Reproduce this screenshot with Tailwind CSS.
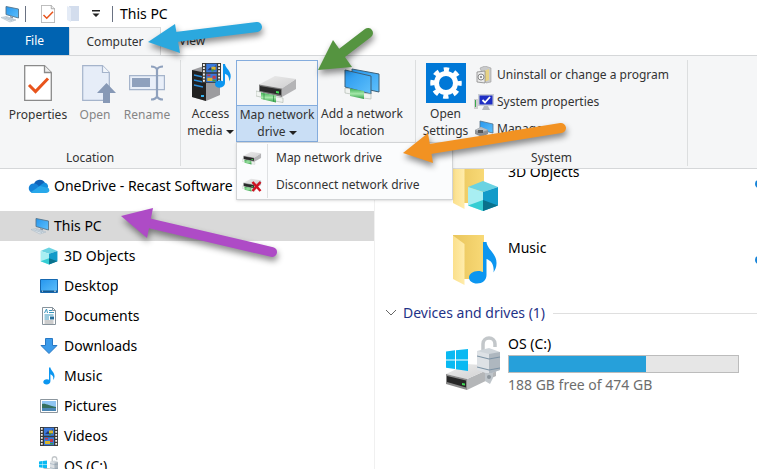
<!DOCTYPE html>
<html lang="en">
    <head>
        <meta charset="UTF-8" />
        <meta name="viewport" content="width=device-width, initial-scale=1.0" />
        <title>This PC</title>
        <script src="https://cdn.jsdelivr.net/npm/@tailwindcss/browser@4"></script>
    </head>
    <body class="relative flex h-screen flex-col overflow-hidden bg-white font-['Noto_Sans','Open_Sans',sans-serif] text-[14px] leading-[18px] text-black">
        <!-- shared icons -->
        <svg class="absolute h-0 w-0" aria-hidden="true">
            <defs>
                <linearGradient id="gScreen" x1="0" y1="0" x2="1" y2="1">
                    <stop offset="0" stop-color="#2596ee" />
                    <stop offset="1" stop-color="#5fc0fb" />
                </linearGradient>
                <linearGradient id="gFolder" x1="0" y1="0" x2="1" y2="0">
                    <stop offset="0" stop-color="#e9c55c" />
                    <stop offset="1" stop-color="#f8d976" />
                </linearGradient>
                <linearGradient id="gFlap" x1="0" y1="0" x2="1" y2="0">
                    <stop offset="0" stop-color="#fbe08c" />
                    <stop offset="1" stop-color="#ffecab" />
                </linearGradient>
                <linearGradient id="gTop" x1="0" y1="0" x2="1" y2="1">
                    <stop offset="0" stop-color="#ececec" />
                    <stop offset="1" stop-color="#cfcfd0" />
                </linearGradient>
                <linearGradient id="gGreen" x1="0" y1="0" x2="0" y2="1">
                    <stop offset="0" stop-color="#3fae54" />
                    <stop offset="0.5" stop-color="#a5e8a9" />
                    <stop offset="1" stop-color="#2d9c44" />
                </linearGradient>
            </defs>
            <symbol id="pc" viewBox="0 0 20 18">
                <path d="M6 1.500 18.500 4v9L6 9.500z" fill="url(#gScreen)" stroke="#55758c" stroke-width=".9" />
                <path d="M10 11l3 1v1.500l-3-1z" fill="#8a98a4" />
                <path d="M1 12.500 6.500 11.500 16 15 10 17z" fill="#dfe6ec" stroke="#a9b8c4" stroke-width=".6" />
                <path d="M3.500 12.700l8.500 3M5.500 12.200l8.500 3" stroke="#8fa5b5" stroke-width=".5" />
            </symbol>
            <symbol id="doc" viewBox="0 0 28 36">
                <path d="M.7.700h19.800l6.800 6.800v27.800H.7z" fill="#fff" stroke="#8a8a8a" stroke-width="1.300" />
                <path d="M20.500.700v6.800h6.800" fill="#eee" stroke="#8a8a8a" stroke-width="1.300" />
                <path d="M5 20l6.500 6.500L24 13.500" fill="none" stroke="#e8541c" stroke-width="3" />
            </symbol>
            <symbol id="cube" viewBox="0 0 32 32">
                <path d="M16 1 31 7 16 12 1 7z" fill="#6ad3e2" />
                <path d="M1 7 16 12v19L1 25.500z" fill="#a8eef2" />
                <path d="M31 7 16 12v19l15-5.500z" fill="#129bc9" />
                <path d="M1 25.500 16 20v11z" fill="#35cdd3" />
                <path d="M31 25.500 16 20v11z" fill="#09718c" />
            </symbol>
            <symbol id="note" viewBox="0 0 28 44">
                <path d="M14 1h3.500c.5 7 10.500 12 10 21.500 0 4-1.500 6.500-3 9 1-8-2.500-12-7-13.500V34c0 5-4 8.500-9.500 8.500C3.500 42.500 0 40 0 36.500S4 30 9 30c2 0 3.500.500 5 1z" fill="#0c96f0" />
            </symbol>
            <symbol id="film" viewBox="0 0 18 19">
                <path d="M0 0h18v19H0z" fill="#3a3a38" />
                <path d="M1.800 1v18M16.200 1v18" stroke="#f2f2f2" stroke-width="1.800" stroke-dasharray="1.800 1.200" />
                <path d="M4 .800h10v8H4zM4 10.200h10v8H4z" fill="#3979dc" />
                <path d="M5 7l3-3 2 2 3-4v5z" fill="#26386e" />
                <path d="M9 3.500h4v3H9zM5 14h5v3H5z" fill="#d9b52e" />
                <path d="M10 12h3v3h-3zM5 11h3v1.500H5z" fill="#c23b4a" />
                <path d="M9 6h2v2H9zM10 16h3v1.500h-3z" fill="#3d9a49" />
            </symbol>
            <symbol id="netdrive" viewBox="0 0 42 30">
                <path d="M26 15 40 6v10l-14 8z" fill="#b4b4b6" />
                <path d="M3 11.500 19 3l21 3-14 9.500z" fill="url(#gTop)" />
                <path d="M3 11.500l23 4V24L3 19z" fill="#7d7d7d" />
                <path d="M4 13l21 3.600v5.400L4 18z" fill="#2a2a2a" />
                <path d="M20 18l3 .500v2l-3-.500z" fill="#43e057" />
                <path d="M0 18l7 1.500v5L0 23zM19 23.500l8 1.500v4.500l-8-1.500z" fill="#f1f4f1" stroke="#a9b3aa" stroke-width=".6" />
                <path d="M5 19.500 20 22.500v7L5 26z" fill="url(#gGreen)" />
                <path d="M8 20.500v6M17.500 22.500v6" stroke="#2a8a3e" stroke-width=".7" />
            </symbol>
            <symbol id="folder" viewBox="0 0 34 52">
                <path d="M1 1h31v44H12L1 2z" fill="url(#gFolder)" />
                <path d="M1 1.500 12.500 10v41L1 45z" fill="url(#gFlap)" />
            </symbol>
            <symbol id="windows" viewBox="0 0 22 22">
                <path d="M0 2.500 9 1.300v9.200H0zM10 1.200 22 0v10.500H10zM0 11.500h9v8.500l-9-1.200zM10 11.500h12V22l-12-1.800z" fill="#09b9f2" />
            </symbol>
            <symbol id="lock" viewBox="0 0 24 48">
                <path d="M6 18V8c0-8 12-8 12 0v3" fill="none" stroke="#c3c7ca" stroke-width="3.500" />
                <path d="M0 15l12-3 11 4v18l-11 4L0 34z" fill="#cfd5da" />
                <path d="M0 15l12 3v20L0 34z" fill="#dde1e5" />
                <path d="M12 18l11-2v18l-11 4z" fill="#aeb7bf" />
                <path d="M0 20l12 3 11-2M0 31l12 3 11-2" fill="none" stroke="#7d93a5" stroke-width="1.200" />
                <path d="M8 37h8v5l-3 6-5-3z" fill="#bfc5ca" />
                <circle cx="12" cy="41" r="2" fill="#8b949b" />
            </symbol>
        </svg>

        <header class="flex h-[27px] shrink-0 items-center">
            <svg class="h-[18px] w-5"><use href="#pc" /></svg>
            <span class="ml-[5px] h-4 w-px bg-gray-500"></span>
            <button class="ml-[15px]" aria-label="Properties">
                <svg class="block h-[18px] w-[14px]"><use href="#doc" /></svg>
            </button>
            <button class="ml-3" aria-label="New folder">
                <svg class="block h-[18px] w-3" viewBox="0 0 12 18">
                    <path d="M2 1h10v15H4z" fill="#d3dded" />
                    <path d="M0 1l4 2v14l-4-2z" fill="#e4ebf6" />
                </svg>
            </button>
            <button class="ml-[13px]" aria-label="Customize toolbar">
                <svg class="block h-2 w-2" viewBox="0 0 8 8"><path d="M0 0h8v1.500H0zM.5 3.500h7L4 7z" fill="#222" /></svg>
            </button>
            <span class="ml-[12px] h-4 w-px bg-gray-500"></span>
            <h1 class="ml-[7px]">This PC</h1>
        </header>

        <nav class="flex h-7 shrink-0 text-[12px] text-[#333]">
            <button class="w-[69px] bg-[#0063b1] text-white">File</button>
            <button class="w-[92px] border-x border-t border-[#dadbdc] bg-[#f5f6f7]">Computer</button>
            <button class="ml-[18px]">View</button>
        </nav>

        <section class="relative z-10 flex h-[114px] shrink-0 border-y border-[#d5d7d9] bg-[#f5f6f7] text-[12px] leading-[17px] text-[#333]">
            <div class="mt-1 mb-[2px] flex w-[181px] flex-col justify-between border-r border-[#dcdedf]">
                <div class="flex pl-2">
                    <button class="flex w-[60px] flex-col items-center pt-[5px]">
                        <svg class="h-9 w-7"><use href="#doc" /></svg>
                        <span class="mt-[5px]">Properties</span>
                    </button>
                    <button class="ml-2 flex w-[38px] flex-col items-center pt-[5px] text-[#858585]">
                        <svg class="h-[38px] w-[42px]" viewBox="-8 0 42 38">
                            <path d="M.7.700h19.800l6.800 6.800v27.800H.7z" fill="#e6edf8" stroke="#a5b4cb" stroke-width="1.200" />
                            <path d="M20.500.700v6.800h6.800" fill="#f2f6fb" stroke="#a5b4cb" stroke-width="1.200" />
                            <path d="M24.500 18 34 28h-6v10h-7V28h-6z" fill="#8799b6" />
                        </svg>
                        <span class="mt-[3px]">Open</span>
                    </button>
                    <button class="ml-2 flex w-[50px] flex-col items-center pt-[5px] text-[#858585]">
                        <svg class="h-[38px] w-9" viewBox="0 0 36 38">
                            <path d="M.6 10.600h34.800v14H.6z" fill="#e9eff9" stroke="#a5b4cb" stroke-width="1.200" />
                            <path d="M3 13h18v9H3z" fill="#8fa1bd" />
                            <path d="M22 1.500c3 0 5 1 6 3 1-2 3-3 6-3M22 34.500c3 0 5-1 6-3 1 2 3 3 6 3M28 4v28" fill="none" stroke="#8fa1bd" stroke-width="2.200" />
                        </svg>
                        <span class="mt-[3px]">Rename</span>
                    </button>
                </div>
                <p class="text-center">Location</p>
            </div>

            <div class="mt-1 mb-[2px] flex w-[235px] items-start border-r border-[#dcdedf]">
                <button class="ml-1 flex w-[51px] flex-col items-center pt-[3px] whitespace-nowrap">
                    <svg class="h-[38px] w-[42px]" viewBox="0 0 42 38">
                        <path d="M2 7 14 3l16 3v26L16 38 2 34z" fill="#9c9c9f" />
                        <path d="M2 7 16 10v28L2 34z" fill="#222" />
                        <path d="M4 12l9 2M4 17l9 2M4 22l9 2" stroke="#2d8fdc" stroke-width="1.300" />
                        <path d="M11 32h3v2h-3z" fill="#35b4f2" />
                        <use href="#film" x="12" width="19" height="20" />
                        <use href="#note" x="25" y="0" width="16" height="26" />
                    </svg>
                    <span class="mt-1">Access<br />media <span class="inline-block border-x-4 border-t-4 border-x-transparent border-t-[#222] align-middle"></span></span>
                </button>
                <div class="relative w-[82px]">
                    <button class="block w-full border border-[#84acdd]" aria-expanded="true">
                        <span class="flex h-11 items-end justify-center pb-[2px]">
                            <svg class="h-[30px] w-[42px]"><use href="#netdrive" /></svg>
                        </span>
                        <span class="flex h-9 justify-center border-t border-[#84acdd] bg-[#c9def5] whitespace-nowrap"><span>Map network<br />drive <span class="inline-block border-x-4 border-t-4 border-x-transparent border-t-[#222] align-middle"></span></span></span>
                    </button>
                    <div class="absolute top-full left-0 z-20 flex w-[217px] flex-col border border-[#d2d4d6] bg-[#fbfcfd] py-px shadow-sm" role="menu">
                        <button class="flex h-[27px] items-center text-left" role="menuitem">
                            <span class="flex h-full w-[31px] items-center justify-center border-r border-[#dfe1e3]">
                                <svg class="h-[15px] w-5"><use href="#netdrive" /></svg>
                            </span>
                            <span class="ml-2">Map network drive</span>
                        </button>
                        <button class="flex h-[27px] items-center text-left" role="menuitem">
                            <span class="flex h-full w-[31px] items-center justify-center border-r border-[#dfe1e3]">
                                <svg class="h-[15px] w-5" viewBox="0 0 20 15">
                                    <use href="#netdrive" width="20" height="15" />
                                    <path d="M10.500 5l8 9M18.500 5l-8 9" stroke="#cf1020" stroke-width="2.500" />
                                </svg>
                            </span>
                            <span class="ml-2">Disconnect network drive</span>
                        </button>
                    </div>
                </div>
                <button class="flex w-[88px] flex-col items-center pt-[7px] whitespace-nowrap">
                    <svg class="h-[34px] w-[38px]" viewBox="0 0 38 34">
                        <path d="M9 2 36 7v18L9 19z" fill="url(#gScreen)" stroke="#3d6078" />
                        <path d="M2 3 28 9v18L2 20z" fill="url(#gScreen)" stroke="#3d6078" />
                        <path d="M2 21l6 1v5l-6-1zM20 26l8 1v5l-8-1z" fill="#f0f3f0" stroke="#a9b3aa" stroke-width=".6" />
                        <path d="M7 21.500 21 24v8L7 29z" fill="url(#gGreen)" />
                    </svg>
                    <span class="mt-1">Add a network<br />location</span>
                </button>
            </div>

            <div class="mt-1 mb-[2px] flex w-[272px] flex-col justify-between border-r border-[#dcdedf]">
                <div class="flex">
                    <button class="ml-1 flex w-[51px] flex-col items-center pt-[3px]">
                        <svg class="h-10 w-10" viewBox="0 0 40 40">
                            <path d="M0 0h40v40H0z" fill="#0078d7" />
                            <g fill="none" stroke="#fff">
                                <circle cx="20" cy="20" r="9.500" stroke-width="5" />
                                <circle cx="20" cy="20" r="13.500" stroke-width="4.500" stroke-dasharray="5.300 5.300" stroke-dashoffset="2.600" />
                            </g>
                        </svg>
                        <span class="mt-[2px]">Open<br />Settings</span>
                    </button>
                    <div class="ml-[3px] flex flex-col items-start">
                        <button class="flex h-[27px] items-center gap-[3px] pt-[2px]">
                            <svg class="h-[18px] w-5" viewBox="0 0 20 18">
                                <path d="M6 2 11 0l6 2v14l-5 1z" fill="#c9cacb" stroke="#9e9e9e" stroke-width=".6" />
                                <path d="M10 5l5-2v11l-5 2z" fill="#e8d384" />
                                <path d="M3 6l8-1v12l-8-1z" fill="#e9e9e9" stroke="#888" stroke-width=".8" />
                                <circle cx="7" cy="11" r="3" fill="#f5f5f5" stroke="#707070" stroke-width=".8" />
                                <circle cx="7" cy="11" r="1" fill="#777" />
                            </svg>
                            Uninstall or change a program
                        </button>
                        <button class="flex h-[27px] items-center gap-[3px] pt-[2px]">
                            <svg class="h-[18px] w-5" viewBox="0 0 20 18">
                                <path d="M0 6h4v10H0z" fill="#cfcfcf" />
                                <path d="M1 7h1v7H1z" fill="#39a84e" />
                                <path d="M4 1h16v12H4z" fill="#c9cdd3" />
                                <path d="M5.500 2.500h13v9h-13z" fill="#1f2fc4" />
                                <path d="M8.500 7l2.500 2.500L16 4" fill="none" stroke="#fff" stroke-width="1.800" />
                                <path d="M10 13h4l2 4H8z" fill="#b5b8bd" />
                            </svg>
                            System properties
                        </button>
                        <button class="flex h-[27px] items-center gap-[3px] pt-[2px]">
                            <svg class="h-[18px] w-5" viewBox="0 0 20 18">
                                <path d="M6 1l13 3v9L6 10z" fill="url(#gScreen)" stroke="#55758c" stroke-width=".8" />
                                <path d="M1 10l6-3 7 3v4l-6 3-7-3z" fill="#8e9296" />
                                <path d="M1 10l6-3 7 3-6 2z" fill="#b8bcc0" />
                                <path d="M4 10h5v3H4z" fill="#555" />
                            </svg>
                            Manage
                        </button>
                    </div>
                </div>
                <p class="text-center">System</p>
            </div>
        </section>

        <div class="flex min-h-0 flex-1">
            <aside class="w-[375px] shrink-0 overflow-hidden border-r border-[#f0f0f0]">
                <a href="#" class="mt-[2px] flex h-[30px] items-center gap-1 pl-7">
                    <svg class="h-5 w-[22px]" viewBox="0 0 22 20">
                        <path d="M6 8a6 6 0 0 1 11-1l-4 6z" fill="#0f62b8" />
                        <path d="M5 17A4.600 4.600 0 0 1 6 7.500c2 0 4 1 5 3z" fill="#1583d8" />
                        <path d="M10 11l6-4.500c3 0 4.500 3 4 5L14 15z" fill="#1490df" />
                        <path d="M3 16l9-6 8.500 2c2 3 0 5-2.500 5H5c-1 0-1.500-.3-2-1z" fill="#28a8ea" />
                    </svg>
                    OneDrive - Recast Software
                </a>
                <a href="#" class="mt-[10px] flex h-[30px] items-center gap-1 bg-[#d9d9d9] pl-[30px]">
                    <svg class="h-[18px] w-5"><use href="#pc" /></svg>
                    This PC
                </a>
                <a href="#" class="flex h-[30px] items-center gap-[6px] pl-10">
                    <svg class="h-[18px] w-[18px]"><use href="#cube" /></svg>
                    3D Objects
                </a>
                <a href="#" class="flex h-[30px] items-center gap-[6px] pl-10">
                    <svg class="h-[14px] w-[18px]" viewBox="0 0 18 14">
                        <path d="M.5.500h17v13H.5z" fill="url(#gScreen)" stroke="#1668b0" />
                        <path d="M1 11.500h16v1.500H1z" fill="#17598f" />
                        <path d="M2 12.200h1M14 12.200h2" stroke="#fff" stroke-width=".8" />
                    </svg>
                    Desktop
                </a>
                <a href="#" class="flex h-[30px] items-center gap-[6px] pl-10">
                    <svg class="h-[18px] w-[18px]" viewBox="0 0 18 18">
                        <path d="M2.500.500h10l3 3v14h-13z" fill="#fff" stroke="#87939c" />
                        <path d="M12.500.500v3h3" fill="none" stroke="#87939c" />
                        <path d="M4.500 6l2-4 1 4M9 3.500h3M9 5.500h5M4.500 8h9M4.500 10h4.500M4.500 12h4.500" fill="none" stroke="#3796bd" />
                        <path d="M10 9.500h4v3h-4z" fill="#256f9b" />
                        <path d="M4.500 14h9M4.500 16h9" stroke="#9a9a9a" />
                    </svg>
                    Documents
                </a>
                <a href="#" class="flex h-[30px] items-center gap-[6px] pl-10">
                    <svg class="h-[18px] w-[18px]" viewBox="0 0 18 18">
                        <path d="M5.500 1.500h7v7H17l-8 8-8-8h4.500z" fill="#3c9bea" stroke="#2878c4" />
                    </svg>
                    Downloads
                </a>
                <a href="#" class="flex h-[30px] items-center gap-[6px] pl-10">
                    <svg class="h-[18px] w-[18px]"><use href="#note" /></svg>
                    Music
                </a>
                <a href="#" class="flex h-[30px] items-center gap-[6px] pl-10">
                    <svg class="h-[14px] w-[18px]" viewBox="0 0 18 14">
                        <path d="M.5.500h17v13H.5z" fill="#fff" stroke="#8c969e" />
                        <path d="M2 2h14v10H2z" fill="#8fc5f2" />
                        <path d="M2 5c4-1 7 2 14 3v1H2z" fill="#35705e" />
                        <path d="M2 9h14v3H2z" fill="#4b87b5" />
                    </svg>
                    Pictures
                </a>
                <a href="#" class="flex h-[30px] items-center gap-[6px] pl-10">
                    <svg class="h-[19px] w-[18px]"><use href="#film" /></svg>
                    Videos
                </a>
                <a href="#" class="flex h-[30px] items-center gap-[6px] pl-[39px]">
                    <svg class="h-5 w-[19px]" viewBox="0 0 19 20">
                        <use href="#windows" y="4" width="8" height="9" />
                        <path d="M1 14l5-2 12 1v4L8 19l-7-2z" fill="#b9bbbd" />
                        <use href="#lock" x="11" width="9" height="18" />
                    </svg>
                    OS (C:)
                </a>
            </aside>

            <main class="min-w-0 flex-1 overflow-hidden">
                <ul class="-mt-[11px]">
                    <li class="flex h-[76px] items-start pl-[77px]">
                        <svg class="h-[56px] w-[47px]" viewBox="0 0 47 56">
                            <use href="#folder" width="34" height="52" />
                            <use href="#cube" x="15" y="22" width="32" height="32" />
                        </svg>
                        <span class="mt-[5px] ml-[9px]">3D Objects</span>
                        <svg class="mt-5 -mr-2 ml-auto h-3 w-3" viewBox="0 0 12 12"><circle cx="6" cy="6" r="3" fill="none" stroke="#1683d8" stroke-width="2" /></svg>
                    </li>
                    <li class="flex h-[76px] items-start pl-[77px]">
                        <svg class="h-[56px] w-[47px]" viewBox="0 0 47 56">
                            <use href="#folder" width="34" height="52" />
                            <use href="#note" x="17" y="7" width="28" height="44" />
                        </svg>
                        <span class="mt-[5px] ml-[9px]">Music</span>
                        <svg class="mt-5 -mr-2 ml-auto h-3 w-3" viewBox="0 0 12 12"><circle cx="6" cy="6" r="3" fill="none" stroke="#1683d8" stroke-width="2" /></svg>
                    </li>
                </ul>
                <h2 class="-mt-[6px] flex items-center text-[#1e3287]">
                    <svg class="ml-[10px] h-3 w-3" viewBox="0 0 12 12"><path d="M1 3l5 5 5-5" fill="none" stroke="#666" /></svg>
                    <span class="ml-[6px]">Devices and drives (1)</span>
                    <span class="ml-2 h-px flex-1 bg-[#dfdfdf]"></span>
                </h2>
                <div class="mt-[13px] flex pl-[70px]">
                    <svg class="h-14 w-14" viewBox="0 0 56 56">
                        <path d="M22 44 51 31v10L22 55z" fill="#b4b6b8" />
                        <path d="M1 39 22 29l29 2-29 13z" fill="url(#gTop)" />
                        <path d="M1 39l21 5v11L1 49z" fill="#8a8a8a" />
                        <path d="M2 41l19 4.500v7L2 47z" fill="#262626" />
                        <path d="M17 48l3 .500v2l-3-.500z" fill="#3fdd56" />
                        <use href="#windows" x="1" y="14" width="22" height="22" />
                        <use href="#lock" x="32" y="1" width="24" height="48" />
                    </svg>
                    <div class="ml-[7px] flex w-[231px] flex-col">
                        <label for="usage">OS (C:)</label>
                        <progress id="usage" max="474" value="283" class="mt-[2px] h-[18px] w-full appearance-none border border-[#bcbcbc] [&::-webkit-progress-bar]:bg-[#e6e6e6] [&::-webkit-progress-value]:bg-[#26a0da]"></progress>
                        <p class="mt-[3px] text-[#6d6d6d]">188 GB free of 474 GB</p>
                    </div>
                </div>
            </main>
        </div>

        <!-- callout arrows -->
        <svg class="pointer-events-none absolute top-0 left-0 z-30 h-[469px] w-[757px] drop-shadow-[1px_4px_3px_rgb(0_0_0/0.45)]" viewBox="0 0 757 469" stroke-width="10" stroke-linecap="round">
            <path d="M176 37 257 27" stroke="#2ba8de" />
            <path d="M148 42 175 24 180 53z" fill="#2ba8de" />
            <path d="M338 56 368 33" stroke="#559440" />
            <path d="M318 70 333 40 352 67z" fill="#559440" />
            <path d="M430 149 561 128" stroke="#f29222" />
            <path d="M403 153 428 133 433 163z" fill="#f29222" />
            <path d="M148 223 272 252" stroke="#ae4bc6" />
            <path d="M121 216 153 208 147 238z" fill="#ae4bc6" />
        </svg>
    </body>
</html>
